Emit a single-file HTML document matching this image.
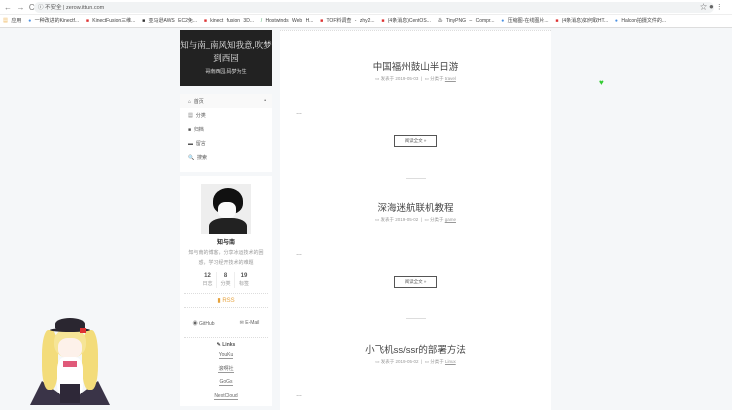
<!DOCTYPE html>
<html><head><meta charset="utf-8"><style>
*{margin:0;padding:0;box-sizing:border-box}
body{width:732px;height:403px;overflow:hidden;background:#f5f7f9;font-family:"Liberation Sans","Noto Sans CJK SC",sans-serif;position:relative;color:#555}
.abs{position:absolute}
.c{text-align:center}
</style></head><body>
<div class="abs" style="left:0;top:0;width:732px;height:15px;background:#fff;border-bottom:1px solid #eee"></div>
<div class="abs" style="left:4px;top:3px;font-size:8px;color:#777">←&nbsp;&nbsp;→&nbsp;&nbsp;C</div>
<div class="abs" style="left:34px;top:2px;width:680px;height:11px;background:#f1f3f4;border-radius:6px"></div>
<div class="abs" style="left:38px;top:3px;font-size:5.5px;color:#555">ⓘ 不安全 | zerow.ittun.com</div>
<div class="abs" style="left:700px;top:2px;font-size:7px;color:#666">☆ <span style="font-size:8px">●</span> ⋮</div>
<div class="abs" style="left:0;top:15px;width:732px;height:13px;background:#fff;border-bottom:1px solid #ddd"></div>
<div class="abs" style="left:3px;top:17px;font-size:5px;color:#444;white-space:nowrap;word-spacing:2px">
<span style="color:#e9a02c">▦</span> 应用 &nbsp;<span style="color:#4a90e2">●</span> 一种改进的Kinectf... &nbsp;<span style="color:#d33">■</span> KinectFusion三维... &nbsp;<span style="color:#333">■</span> 亚马逊AWS EC2免... &nbsp;<span style="color:#d33">■</span> kinect fusion 3D... &nbsp;<span style="color:#4a6">/</span> Hostwinds Web H... &nbsp;<span style="color:#d33">■</span> TOF料调查 - zhy2... &nbsp;<span style="color:#d33">■</span> (4条消息)CentOS... &nbsp;<span style="color:#555">♨</span> TinyPNG – Compr... &nbsp;<span style="color:#4a90e2">●</span> 压缩图-在线图片... &nbsp;<span style="color:#d33">■</span> (4条消息)如何取HT... &nbsp;<span style="color:#4a90e2">●</span> Halcon拍摄文件的...</div>

<div class="abs c" style="left:180px;top:30px;width:92px;height:56px;background:#222;color:#fff">
<div style="font-family:'Liberation Serif','Noto Serif CJK SC',serif;font-size:8.5px;line-height:13px;padding-top:9px;color:#eee">知与南_南风知我意,吹梦到西园</div>
<div style="font-size:5px;color:#ddd;margin-top:3px">哥南西园,码梦为生</div></div>
<div class="abs" style="left:180px;top:94px;width:92px;height:78px;background:#fff;font-size:5px;color:#555">
<div style="height:14px;background:#f9f9f9;padding:4px 0 0 8px">⌂&nbsp; 首页<span style="float:right;margin-right:6px">•</span></div>
<div style="height:14px;padding:4px 0 0 8px">▦&nbsp; 分类</div>
<div style="height:14px;padding:4px 0 0 8px">■&nbsp; 归档</div>
<div style="height:14px;padding:4px 0 0 8px">▬&nbsp; 留言</div>
<div style="height:14px;padding:4px 0 0 8px">🔍&nbsp; 搜索</div></div>
<div class="abs c" style="left:180px;top:176px;width:92px;height:230px;background:#fff;font-size:5px;color:#999">
<div style="margin:8px auto 0;width:50px;height:50px;background:#eee;position:relative;overflow:hidden">
<div style="position:absolute;left:12px;top:4px;width:30px;height:26px;background:#111;border-radius:50% 50% 40% 40%"></div>
<div style="position:absolute;left:17px;top:18px;width:18px;height:16px;background:#fafafa;border-radius:40%"></div>
<div style="position:absolute;left:8px;top:34px;width:38px;height:20px;background:#222;border-radius:40% 40% 0 0"></div></div>
<div style="color:#222;font-weight:bold;font-size:6px;margin-top:3px">知与南</div>
<div style="line-height:10px;margin-top:2px;padding:0 6px">知与南的博客，分享冰运技术的困惑，学习经开技术的难题</div>
<div style="display:flex;justify-content:center;margin-top:4px;line-height:8px">
<div style="width:18px;border-right:1px solid #eee"><b style="color:#555;font-size:6px">12</b><br>日志</div>
<div style="width:18px;border-right:1px solid #eee"><b style="color:#555;font-size:6px">8</b><br>分类</div>
<div style="width:18px"><b style="color:#555;font-size:6px">19</b><br>标签</div></div>
<div style="margin:5px 4px 0;border-top:1px dotted #ddd;border-bottom:1px dotted #ddd;padding:3px 0;color:#e6a23c;font-size:6px">▮ RSS</div>
<div style="display:flex;justify-content:space-around;margin-top:12px;color:#666">
<span>◉ GitHub</span><span>✉ E-Mail</span></div>
<div style="margin:10px 4px 0;border-top:1px dotted #ddd;padding-top:4px;color:#555;font-weight:bold">✎ Links</div>
<div style="line-height:13.5px;color:#666;margin-top:1px"><span style="border-bottom:1px solid #999">YouKu</span><br><span style="border-bottom:1px solid #999">滚啊社</span><br><span style="border-bottom:1px solid #999">GoGs</span><br><span style="border-bottom:1px solid #999">NextCloud</span></div></div>

<div class="abs" style="left:280px;top:30px;width:271px;height:380px;background:#fff;border-top:1px dotted #ddd"></div>
<div class="abs c" style="left:280px;top:59px;width:271px;font-size:9.5px;color:#444">中国福州鼓山半日游</div>
<div class="abs c" style="left:280px;top:76px;width:271px;font-size:4.5px;color:#999">▭ 发表于 2019-05-03 &nbsp;|&nbsp; ▭ 分类于 <u>travel</u></div>
<div class="abs" style="left:296px;top:110px;font-size:6px">…</div>
<div class="abs c" style="left:394px;top:135px;width:43px;height:12px;border:1.5px solid #555;font-size:4.5px;line-height:9px">阅读全文 »</div>
<div class="abs" style="left:406px;top:178px;width:20px;border-top:1px solid #ddd"></div>

<div class="abs c" style="left:280px;top:200px;width:271px;font-size:9.5px;color:#444">深海迷航联机教程</div>
<div class="abs c" style="left:280px;top:217px;width:271px;font-size:4.5px;color:#999">▭ 发表于 2019-05-02 &nbsp;|&nbsp; ▭ 分类于 <u>game</u></div>
<div class="abs" style="left:296px;top:251px;font-size:6px">…</div>
<div class="abs c" style="left:394px;top:276px;width:43px;height:12px;border:1.5px solid #555;font-size:4.5px;line-height:9px">阅读全文 »</div>
<div class="abs" style="left:406px;top:318px;width:20px;border-top:1px solid #ddd"></div>

<div class="abs c" style="left:280px;top:342px;width:271px;font-size:9.5px;color:#444">小飞机ss/ssr的部署方法</div>
<div class="abs c" style="left:280px;top:359px;width:271px;font-size:4.5px;color:#999">▭ 发表于 2019-05-02 &nbsp;|&nbsp; ▭ 分类于 <u>Linux</u></div>
<div class="abs" style="left:296px;top:392px;font-size:6px">…</div>

<div class="abs" style="left:599px;top:78px;color:#3c3;font-size:8px">♥</div>

<div class="abs" style="left:30px;top:375px;width:80px;height:30px;background:#3a3448;clip-path:polygon(0 100%,15% 20%,35% 60%,65% 60%,85% 20%,100% 100%)"></div>
<div class="abs" style="left:42px;top:330px;width:16px;height:60px;background:#f3dc7a;border-radius:40%"></div>
<div class="abs" style="left:82px;top:330px;width:16px;height:60px;background:#f3dc7a;border-radius:40%"></div>
<div class="abs" style="left:54px;top:328px;width:32px;height:30px;background:#f6e596;border-radius:45%"></div>
<div class="abs" style="left:58px;top:338px;width:24px;height:20px;background:#fdf1ea;border-radius:40%"></div>
<div class="abs" style="left:57px;top:357px;width:26px;height:40px;background:#fff;border-radius:30%"></div>
<div class="abs" style="left:63px;top:361px;width:14px;height:6px;background:#e05a7a"></div>
<div class="abs" style="left:60px;top:384px;width:20px;height:19px;background:#2e2838"></div>
<div class="abs" style="left:55px;top:318px;width:30px;height:12px;background:#2a2630;border-radius:50% 50% 20% 20%"></div>
<div class="abs" style="left:50px;top:328px;width:40px;height:4px;background:#2a2630;border-radius:50%"></div>
<div class="abs" style="left:80px;top:328px;width:6px;height:5px;background:#d33"></div>
</body></html>
